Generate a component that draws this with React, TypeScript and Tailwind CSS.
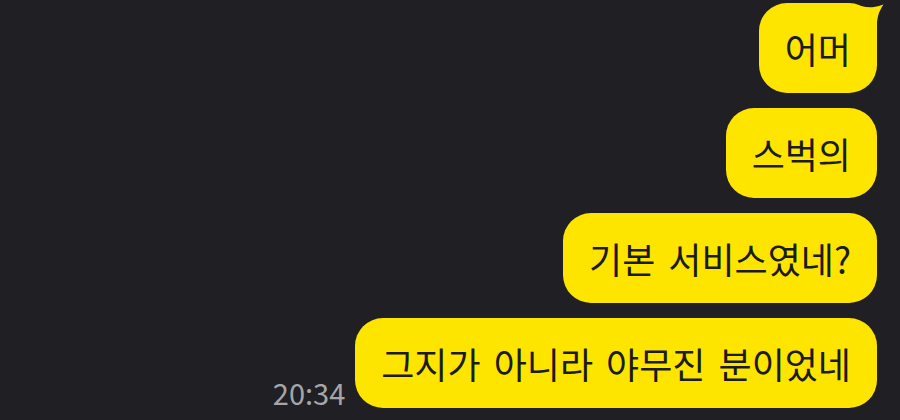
import React from "react";

type Msg = {
  text: string;
  time?: string;
  tail?: boolean;
};

const messages: Msg[] = [
  { text: "어머", tail: true },
  { text: "스벅의" },
  { text: "기본 서비스였네?" },
  { text: "그지가 아니라 야무진 분이었네", time: "20:34" },
];

const font = "font-['Noto_Sans_CJK_KR','Noto_Sans',sans-serif]";

const Bubble: React.FC<{ msg: Msg }> = ({ msg }) => (
  <div className="relative">
    <div
      className={`h-[90px] flex items-center px-[26px] rounded-[28px] bg-[#fee500] text-[#1b1b1b] text-[36px] leading-none [word-spacing:5px] ${font}`}
    >
      {msg.text}
    </div>
    {msg.tail && (
      // little speech tail on the top-right corner
      <svg
        className="absolute -top-[3px] -right-[10px]"
        width="26"
        height="30"
        viewBox="0 0 26 30"
      >
        <path
          d="M0 6 Q8 8 13 7 Q18 6 22.5 4.5 Q17 12 16 22 L16 30 L0 30 Z"
          fill="#fee500"
        />
      </svg>
    )}
  </div>
);

const App: React.FC = () => {
  return (
    <div className="w-[900px] h-[420px] bg-[#1f1f24] overflow-hidden flex flex-col items-end gap-[15px] pt-[3px] pr-[23px]">
      {messages.map((m) =>
        m.time ? (
          <div key={m.text} className="flex items-end gap-[10px]">
            <span className={`text-[29px] leading-none pb-[1px] text-[#a6a6a8] ${font}`}>
              {m.time}
            </span>
            <Bubble msg={m} />
          </div>
        ) : (
          <Bubble key={m.text} msg={m} />
        )
      )}
    </div>
  );
};

export default App;
